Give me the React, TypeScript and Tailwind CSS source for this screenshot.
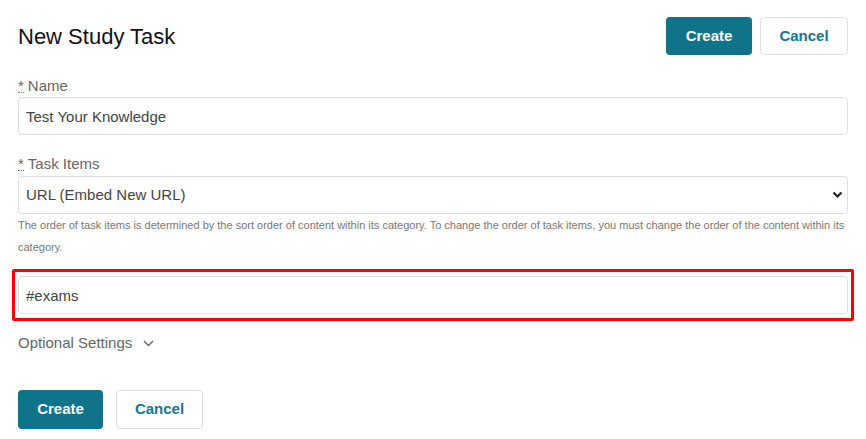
const inputBox =
  'block w-full h-[38px] rounded-[4px] border border-[#dedede] bg-white px-[7px] text-[15px] text-[#444] outline-none';

function Required() {
  return (
    <abbr title="required" className="no-underline border-b border-dotted border-[#777] leading-[13px] inline-block mr-[4px]">
      *
    </abbr>
  );
}

function Buttons() {
  return (
    <div className="flex gap-[8px]">
      <button className="h-[38px] w-[86px] rounded-[4px] bg-[#0f7389] text-[15px] font-bold text-white">Create</button>
      <button className="h-[38px] w-[88px] rounded-[4px] border border-[#e0e0e0] bg-white text-[15px] font-bold text-[#157791]">
        Cancel
      </button>
    </div>
  );
}

export default function App() {
  return (
    <div className="min-h-screen bg-white px-[18px] pt-[17px] font-['Liberation_Sans',Arial,sans-serif]">
      <div className="flex items-center justify-between h-[38px]">
        <h1 className="text-[22px] text-[#111]">New Study Task</h1>
        <Buttons />
      </div>

      <label className="block mt-[21px] text-[15px] leading-[20px] text-[#666]">
        <Required />
        Name
      </label>
      <input className={`${inputBox} mt-[1px]`} defaultValue="Test Your Knowledge" />

      <label className="block mt-[19px] text-[15px] leading-[20px] text-[#666]">
        <Required />
        Task Items
      </label>
      <div className="relative mt-[2px]">
        <select className={`${inputBox} appearance-none text-[#222]`} defaultValue="url">
          <option value="url">URL (Embed New URL)</option>
        </select>
        {/* select arrow */}
        <svg
          className="pointer-events-none absolute right-[5px] top-[15px]"
          width="11"
          height="8"
          viewBox="0 0 11 8"
          fill="none"
        >
          <path d="M1.5 1.5 L5.5 5.5 L9.5 1.5" stroke="#222" strokeWidth="2.2" />
        </svg>
      </div>
      <p className="text-[11px] leading-[22px] text-[#777]">
        The order of task items is determined by the sort order of content within its category. To change the order of
        task items, you must change the order of the content within its category.
      </p>

      <div className="mt-[11px] mx-[-6px] border-[3px] border-[#f00] rounded-[2px] px-[3px] py-[4px]">
        <input className={inputBox} defaultValue="#exams" />
      </div>

      <button className="mt-[12px] flex items-center gap-[11px] text-[15px] leading-[20px] text-[#666]">
        Optional Settings
        <svg width="11" height="7" viewBox="0 0 11 7" fill="none" className="mt-[1px]">
          <path d="M1 1 L5.5 5.5 L10 1" stroke="#666" strokeWidth="1.4" />
        </svg>
      </button>

      <div className="mt-[37px] flex gap-[13px]">
        <button className="h-[39px] w-[85px] rounded-[4px] bg-[#0f7389] text-[15px] font-bold text-white">Create</button>
        <button className="h-[39px] w-[87px] rounded-[4px] border border-[#e0e0e0] bg-white text-[15px] font-bold text-[#157791]">
          Cancel
        </button>
      </div>
    </div>
  );
}
